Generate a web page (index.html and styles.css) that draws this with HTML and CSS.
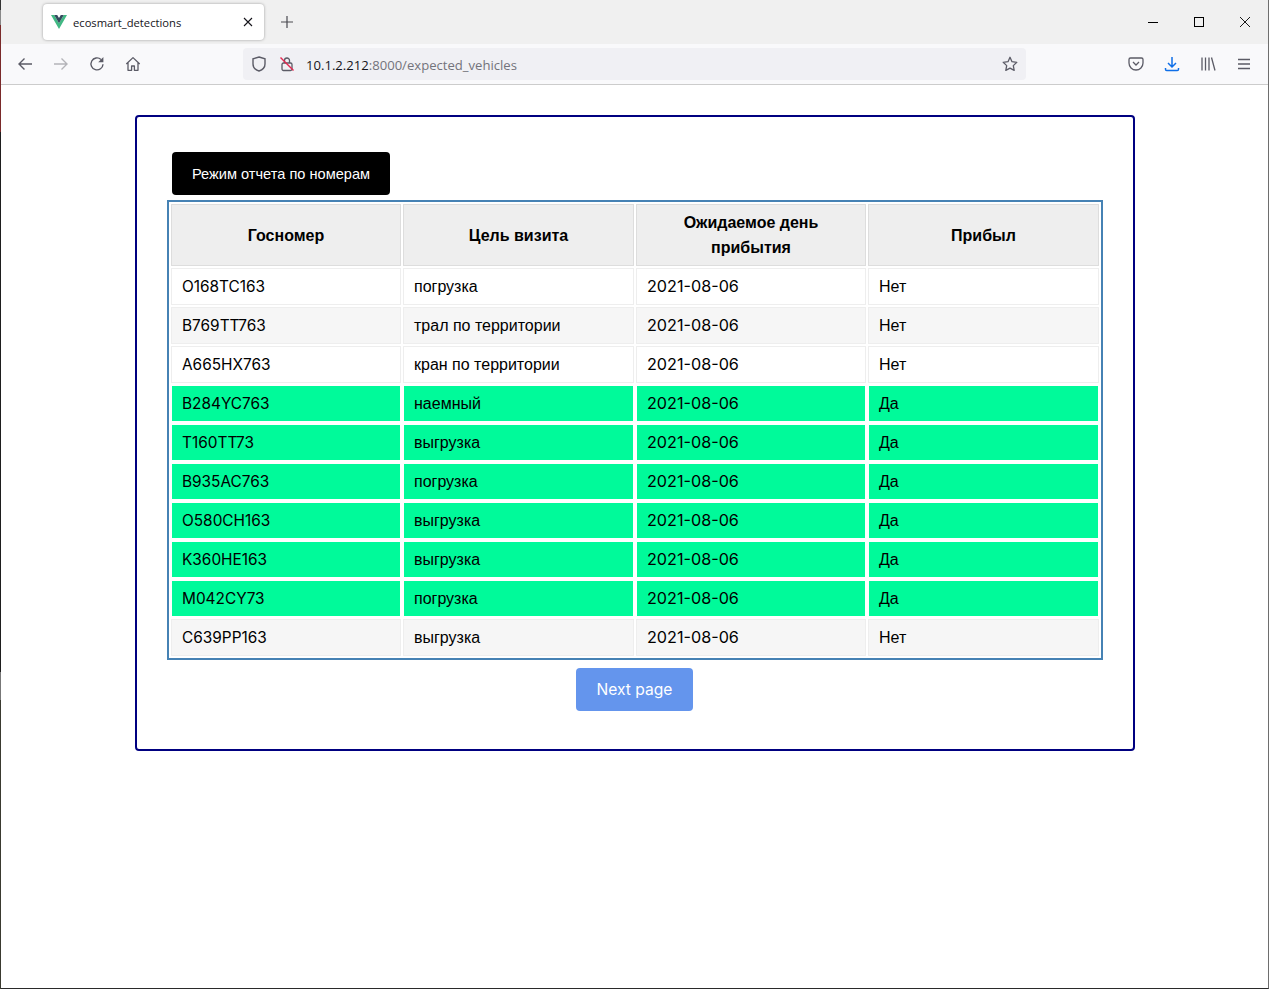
FILE: index.html
```html
<!DOCTYPE html>
<html lang="ru">
<head>
<meta charset="utf-8">
<title>ecosmart_detections</title>
<link rel="stylesheet" href="styles.css">
</head>
<body>
<header class="browser">
  <div class="tabbar">
    <div class="tab">
      <svg class="favicon" viewBox="0 0 16 14" width="16" height="14"><path fill="#41b883" d="M0 0h3.2L8 8.2 12.8 0H16L8 14z"/><path fill="#34495e" d="M3.2 0h3L8 3.1 9.8 0h3L8 8.2z"/></svg>
      <span class="tab-title">ecosmart_detections</span>
      <svg class="tab-close" viewBox="0 0 10 10" width="10" height="10"><path d="M1 1l8 8M9 1l-8 8" stroke="#15141a" stroke-width="1.1" fill="none"/></svg>
    </div>
    <svg class="new-tab" viewBox="0 0 12 12" width="12" height="12"><path d="M6 0v12M0 6h12" stroke="#4a4a50" stroke-width="1.2" fill="none"/></svg>
    <div class="win-controls">
      <svg viewBox="0 0 10 10" width="10" height="10"><path d="M0 5.500h10" stroke="#000" stroke-width="1" fill="none"/></svg>
      <svg viewBox="0 0 10 10" width="10" height="10"><rect x=".5" y=".5" width="9" height="9" stroke="#000" fill="none"/></svg>
      <svg viewBox="0 0 10 10" width="10" height="10"><path d="M0 0l10 10M10 0L0 10" stroke="#000" stroke-width=".9" fill="none"/></svg>
    </div>
  </div>
  <div class="navbar">
    <div class="nav-left">
      <svg viewBox="0 0 16 16" width="16" height="16"><path d="M15 8H2M7.500 2.500L2 8l5.500 5.500" stroke="#5b5b66" stroke-width="1.400" fill="none"/></svg>
      <svg viewBox="0 0 16 16" width="16" height="16"><path d="M1 8h13M8.500 2.500L14 8l-5.500 5.500" stroke="#b4b4b9" stroke-width="1.400" fill="none"/></svg>
      <svg viewBox="0 0 16 16" width="16" height="16"><path d="M14 8.200A6 6 0 1 1 12 3.400" stroke="#5b5b66" stroke-width="1.400" fill="none"/><path d="M14.400 1v5.200H9.200z" fill="#5b5b66"/></svg>
      <svg viewBox="0 0 16 16" width="16" height="16"><path d="M1.300 8L8 1.600 14.700 8M3 6.800V14.300h3.600V10h2.800v4.300H13V6.800" stroke="#5b5b66" stroke-width="1.300" fill="none" stroke-linejoin="round"/></svg>
    </div>
    <div class="urlbar">
      <svg viewBox="0 0 16 16" width="16" height="16"><path d="M8 1l6 1.800V8c0 3.500-2.600 5.900-6 7-3.400-1.100-6-3.500-6-7V2.800z" stroke="#5b5b66" stroke-width="1.400" fill="none"/></svg>
      <svg class="lock" viewBox="0 0 16 16" width="16" height="16"><rect x="3" y="7" width="10" height="7.500" rx="1.500" stroke="#5b5b66" stroke-width="1.300" fill="none"/><path d="M5.500 7V4.500a2.500 2.500 0 0 1 5 0V7" stroke="#5b5b66" stroke-width="1.300" fill="none"/><path d="M1.500 1.500l13 13" stroke="#e22850" stroke-width="1.400" fill="none"/></svg>
      <span class="url"><span class="url-host">10.1.2.212</span>:8000/expected_vehicles</span>
      <svg class="star" viewBox="0 0 16 16" width="16" height="16"><path d="M8 1.300l2 4.400 4.800.6-3.500 3.300.9 4.800L8 12.100l-4.200 2.300.9-4.800L1.200 6.300 6 5.700z" stroke="#5b5b66" stroke-width="1.300" fill="none" stroke-linejoin="round"/></svg>
    </div>
    <div class="nav-right">
      <svg viewBox="0 0 16 16" width="16" height="16"><path d="M2.500 2h11A1.500 1.500 0 0 1 15 3.500V7A7 7 0 0 1 1 7V3.500A1.500 1.500 0 0 1 2.500 2z" stroke="#5b5b66" stroke-width="1.300" fill="none"/><path d="M5 6l3 3 3-3" stroke="#5b5b66" stroke-width="1.300" fill="none"/></svg>
      <svg viewBox="0 0 16 16" width="16" height="16"><path d="M8 1v9.500M4 7l4 4 4-4M1.500 12v1.200c0 .7.500 1.300 1.200 1.300h10.600c.7 0 1.200-.6 1.200-1.300V12" stroke="#0f6fe8" stroke-width="1.500" fill="none"/></svg>
      <svg viewBox="0 0 16 16" width="16" height="16"><path d="M2 1.500v13M5.500 1.500v13M9 1.500v13M11.500 1.500l3.500 13" stroke="#5b5b66" stroke-width="1.300" fill="none"/></svg>
      <svg viewBox="0 0 16 16" width="16" height="16"><path d="M2 3.500h12M2 8h12M2 12.500h12" stroke="#5b5b66" stroke-width="1.300" fill="none"/></svg>
    </div>
  </div>
</header>
<main class="page">
  <section class="panel">
    <button class="mode-btn" type="button">Режим отчета по номерам</button>
    <table class="vehicles">
      <thead>
        <tr><th>Госномер</th><th>Цель визита</th><th>Ожидаемое день прибытия</th><th>Прибыл</th></tr>
      </thead>
      <tbody>
        <tr><td class="plate">O168TC163</td><td>погрузка</td><td class="date">2021-08-06</td><td>Нет</td></tr>
        <tr class="alt"><td class="plate">B769TT763</td><td>трал по территории</td><td class="date">2021-08-06</td><td>Нет</td></tr>
        <tr><td class="plate">A665HX763</td><td>кран по территории</td><td class="date">2021-08-06</td><td>Нет</td></tr>
        <tr class="ok"><td class="plate">B284YC763</td><td>наемный</td><td class="date">2021-08-06</td><td>Да</td></tr>
        <tr class="ok"><td class="plate">T160TT73</td><td>выгрузка</td><td class="date">2021-08-06</td><td>Да</td></tr>
        <tr class="ok"><td class="plate">B935AC763</td><td>погрузка</td><td class="date">2021-08-06</td><td>Да</td></tr>
        <tr class="ok"><td class="plate">O580CH163</td><td>выгрузка</td><td class="date">2021-08-06</td><td>Да</td></tr>
        <tr class="ok"><td class="plate">K360HE163</td><td>выгрузка</td><td class="date">2021-08-06</td><td>Да</td></tr>
        <tr class="ok"><td class="plate">M042CY73</td><td>погрузка</td><td class="date">2021-08-06</td><td>Да</td></tr>
        <tr class="alt"><td class="plate">C639PP163</td><td>выгрузка</td><td class="date">2021-08-06</td><td>Нет</td></tr>
      </tbody>
    </table>
    <div class="pager"><button class="next-btn" type="button">Next page</button></div>
  </section>
</main>
</body>
</html>
```
FILE: styles.css
```css
* { box-sizing: border-box; }
html, body { margin: 0; height: 100%; }
body {
  background: #fff;
  overflow: hidden;
  border-left: 1px solid #1e1e1e;
  border-right: 1px solid #6e6e6e;
  border-bottom: 1px solid #2a2a2a;
  font-family: "Liberation Sans", Arial, sans-serif;
}
/* window edge of the desktop behind the browser */
body::before {
  content: "";
  position: fixed;
  left: 0;
  top: 0;
  bottom: 0;
  width: 1px;
  background: linear-gradient(#333 0 10px, #888 10px 25px, #7a2a2a 25px 132px, #1e1e1e 132px 672px, #777 672px 700px, #3a3a30 700px);
  z-index: 2;
}
svg { display: block; flex: none; }

.browser { border-bottom: 1px solid #ccc; margin-left: -1px; margin-right: -1px; }
.tabbar {
  height: 44px;
  background: #f0f0f0;
  display: flex;
  align-items: center;
  padding-left: 43px;
}
.tab {
  width: 221px;
  height: 36px;
  background: #fff;
  border-radius: 4px;
  box-shadow: 0 0 3px rgba(0,0,0,.35);
  display: flex;
  align-items: center;
  padding: 0 11px 0 8px;
}
.tab-title {
  font: 11.2px "Open Sans", sans-serif;
  color: #15141a;
  margin-left: 6px;
  flex: 1;
}
.new-tab { margin-left: 17px; }
.win-controls { margin-left: auto; display: flex; gap: 36px; padding-right: 19px; }

.navbar {
  height: 40px;
  background: #f9f9fb;
  display: flex;
  align-items: center;
}
.nav-left { width: 243px; display: flex; gap: 20px; padding-left: 17px; }
.urlbar {
  width: 783px;
  height: 32px;
  background: #f0f0f4;
  border-radius: 4px;
  display: flex;
  align-items: center;
  padding: 0 8px;
  gap: 12px;
}
.url { font: 13.1px "Open Sans", sans-serif; color: #73737b; flex: 1; margin: 2px 0 0 -1px; }
.url-host { color: #15141a; }
.nav-right { display: flex; gap: 20px; padding-left: 102px; }

.page { padding: 30px 0 0 134px; }
.panel {
  width: 1000px;
  height: 636px;
  border: 2px solid #000080;
  border-radius: 4px;
  padding: 35px 30px 0 30px;
}
.mode-btn {
  display: block;
  margin-left: 5px;
  width: 218px;
  height: 43px;
  background: #000;
  color: #fff;
  border: 0;
  border-radius: 4px;
  font: 14.6px "Liberation Sans", sans-serif;
  padding: 0;
}
.vehicles {
  margin-top: 5px;
  width: 936px;
  table-layout: fixed;
  border: 2px solid #4682b4;
  border-spacing: 2px;
  font-size: 16px;
  line-height: 25px;
  color: #000;
}
.vehicles th, .vehicles td {
  padding: 5px 10px;
  border: 1px solid #eee;
}
.vehicles th { background: #eee; border-color: #ddd; font-weight: bold; text-align: center; }
.vehicles th:nth-child(1) { width: 230px; }
.vehicles th:nth-child(2) { width: 231px; }
.vehicles th:nth-child(3) { width: 230px; }
.vehicles td { text-align: left; background: #fff; }
.vehicles .alt td { background: #f6f6f6; }
.vehicles .ok td { background: #00fa9a; border-color: #fff; }
.vehicles .plate { font-family: "Inter", sans-serif; font-size: 15.4px; }
.vehicles .date { font-family: "Inter", sans-serif; font-size: 16.2px; }
.pager { display: flex; justify-content: center; margin-top: 8px; padding-right: 1px; }
.next-btn {
  width: 117px;
  height: 43px;
  background: #6495ed;
  color: #fff;
  border: 0;
  border-radius: 4px;
  font: 15.6px "Inter", sans-serif;
  padding: 0;
}
```
